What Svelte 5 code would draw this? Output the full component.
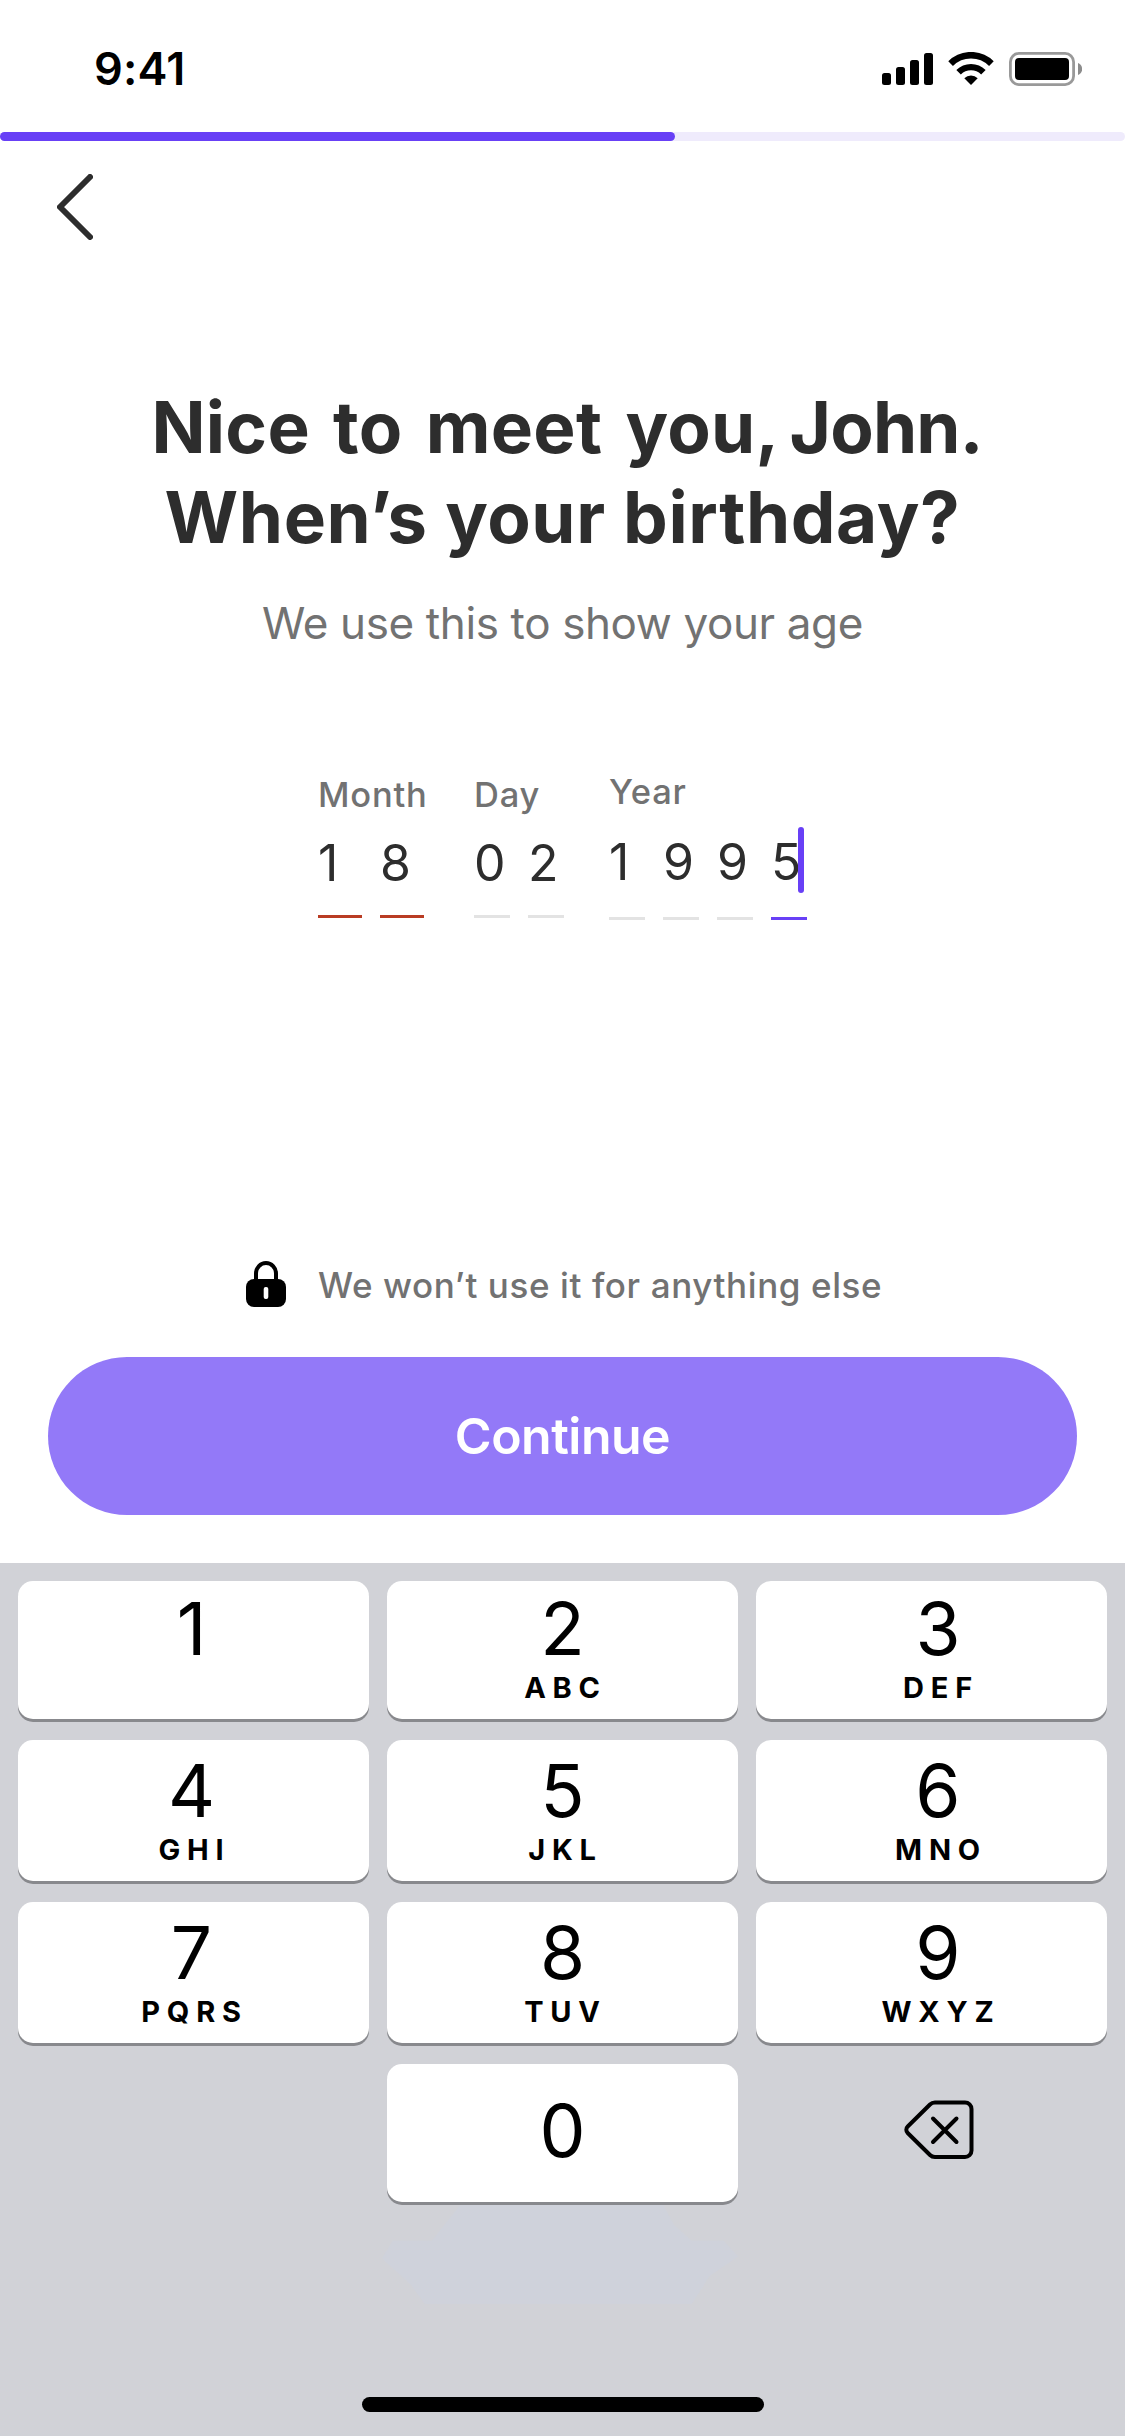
<script>
    const progress = 60;

    // Birthday entry, one group per date part
    let groups = [
        { name: 'Month', digits: ['1', '8'], invalid: true },
        { name: 'Day', digits: ['0', '2'], invalid: false },
        { name: 'Year', digits: ['1', '9', '9', '5'], invalid: false }
    ];

    // The cell that holds the caret
    let active = { group: 2, cell: 3 };

    const keys = [
        { digit: '1', letters: '' },
        { digit: '2', letters: 'ABC' },
        { digit: '3', letters: 'DEF' },
        { digit: '4', letters: 'GHI' },
        { digit: '5', letters: 'JKL' },
        { digit: '6', letters: 'MNO' },
        { digit: '7', letters: 'PQRS' },
        { digit: '8', letters: 'TUV' },
        { digit: '9', letters: 'WXYZ' }
    ];

    function setDigit(value) {
        groups[active.group].digits[active.cell] = value;
        groups = groups;
    }
</script>

<div class="screen">
    <main>
        <header class="statusBar">
            <span class="time">9:41</span>
            <div class="statusIcons">
                <svg class="signal" width="51" height="32" viewBox="0 0 51 32">
                    <rect x="0" y="20" width="9" height="12" rx="2.5" />
                    <rect x="14" y="14" width="9" height="18" rx="2.5" />
                    <rect x="28" y="7" width="9" height="25" rx="2.5" />
                    <rect x="42" y="0" width="9" height="32" rx="2.5" />
                </svg>
                <svg class="wifi" width="46" height="33" viewBox="0 0 46 33">
                    <path d="M2.6 11.6a29 29 0 0 1 40.8 0" fill="none" stroke="#000" stroke-width="6.6" />
                    <path d="M10.6 20.2a17.6 17.6 0 0 1 24.8 0" fill="none" stroke="#000" stroke-width="6.4" />
                    <path d="M16.3 26.2a9.6 9.6 0 0 1 13.4 0L23 33z" />
                </svg>
                <svg class="battery" width="73" height="34" viewBox="0 0 73 34">
                    <rect x="1.4" y="1.4" width="63.2" height="31.2" rx="8.5" fill="none" stroke="#999" stroke-width="2.8" />
                    <rect x="6" y="6" width="54" height="22" rx="4" />
                    <path d="M69 11v12c2.6-1 4.2-3.3 4.2-6s-1.6-5-4.2-6z" fill="#8c8c8c" />
                </svg>
            </div>
        </header>

        <div class="progress">
            <div class="progressValue" style="width: {progress}%"></div>
        </div>

        <button class="back" aria-label="Back">
            <svg width="36" height="66" viewBox="0 0 36 66">
                <path d="M33 3 3 33l30 30" fill="none" stroke="#2d2d2d" stroke-width="6" stroke-linecap="round" stroke-linejoin="round" />
            </svg>
        </button>

        <h1>
            <span class="greeting">Nice to meet you, <span class="name">John.</span></span>
            <span class="question">When’s your birthday?</span>
        </h1>
        <p class="subtitle">We use this to show your age</p>

        <section class="birthday">
            {#each groups as group, g}
                <div class="group {group.name.toLowerCase()}" class:invalid={group.invalid}>
                    <span class="label">{group.name}</span>
                    <div class="cells">
                        {#each group.digits as digit, c}
                            <span class="cell" class:active={active.group === g && active.cell === c}>{digit}</span>
                        {/each}
                    </div>
                </div>
            {/each}
        </section>

        <footer>
            <p class="privacy">
                <svg width="40" height="46" viewBox="0 0 40 46">
                    <path d="M10 20V12.5a10 10.5 0 0 1 20 0V20" fill="none" stroke="#000" stroke-width="4" />
                    <rect x="0" y="18" width="40" height="28" rx="8" />
                    <rect x="17.7" y="26" width="4.6" height="12" rx="2" fill="#fff" />
                </svg>
                <span>We won’t use it for anything else</span>
            </p>
            <button class="continue">Continue</button>
        </footer>
    </main>

    <section class="keyboard">
        <div class="keys">
            {#each keys as key}
                <button class="key" on:click={() => setDigit(key.digit)}>
                    <span class="digit">{key.digit}</span>
                    <span class="letters">{key.letters}</span>
                </button>
            {/each}
            <span></span>
            <button class="key zero" on:click={() => setDigit('0')}>
                <span class="digit">0</span>
            </button>
            <button class="delete" aria-label="Delete" on:click={() => setDigit('')}>
                <svg width="70" height="60" viewBox="0 0 70 60" fill="none" stroke="#000" stroke-width="4" stroke-linecap="round" stroke-linejoin="round">
                    <path d="M31 2.5H61a6.5 6.5 0 0 1 6.5 6.5V50.5a6.5 6.5 0 0 1-6.5 6.5H31a7 7 0 0 1-5-2L3.7 33a4.5 4.5 0 0 1 0-6.5L26 4.5a7 7 0 0 1 5-2z" />
                    <path d="M29 18.5 52.5 42M52.5 18.5 29 42" />
                </svg>
            </button>
        </div>
        <div class="homeIndicator"></div>
    </section>
</div>

<style>
    :global(body) {
        background: #fff;
    }

    .screen {
        width: 1125px;
        height: 2436px;
        display: flex;
        flex-direction: column;
        overflow: hidden;
        font-family: Inter, "Liberation Sans", sans-serif;
        color: #2d2d2d;
    }

    button {
        border: none;
        padding: 0;
        background: none;
        font-family: inherit;
        cursor: pointer;
    }

    svg {
        display: block;
    }

    main {
        height: 1563px;
        display: flex;
        flex-direction: column;
        background: #fff;
    }

    .statusBar {
        height: 132px;
        box-sizing: border-box;
        padding: 5px 43px 0 94px;
        display: flex;
        align-items: center;
        justify-content: space-between;
    }

    .time {
        font-size: 45px;
        font-weight: 600;
        letter-spacing: 0.2px;
        color: #000;
    }

    .statusIcons {
        display: flex;
        align-items: center;
    }

    .wifi {
        margin: 0 15px;
    }

    .progress {
        height: 9px;
        border-radius: 5px;
        background: #efebfc;
    }

    .progressValue {
        height: 100%;
        border-radius: 5px;
        background: #6840f6;
    }

    .back {
        align-self: flex-start;
        margin: 33px 0 0 57px;
    }

    h1 {
        margin: 142px 0 0;
        text-align: center;
        font-size: 71px;
        line-height: 90px;
        font-weight: 700;
        white-space: nowrap;
    }

    h1 > span {
        display: block;
    }

    .greeting {
        padding-left: 9px;
        letter-spacing: 0.3px;
        word-spacing: 6px;
    }

    .name {
        margin-left: -11px;
        letter-spacing: -0.8px;
    }

    .question {
        letter-spacing: 0.6px;
    }

    .subtitle {
        margin: 34px 0 0;
        text-align: center;
        font-size: 44px;
        line-height: 54px;
        letter-spacing: -0.38px;
        color: #727272;
    }

    .birthday {
        margin-top: 121px;
        padding-left: 318px;
        display: flex;
        align-items: flex-start;
    }

    .group {
        padding-top: 3px;
    }

    .month {
        width: 156px;
    }

    .day {
        width: 135px;
    }

    .year {
        padding-top: 0;
    }

    .label {
        display: block;
        font-size: 34.5px;
        line-height: 42px;
        font-weight: 500;
        letter-spacing: 0.8px;
        color: #727272;
    }

    .cells {
        display: flex;
        gap: 18px;
        margin-top: 16px;
    }

    .year .cells {
        margin-top: 18px;
    }

    .cell {
        position: relative;
        box-sizing: border-box;
        width: 36px;
        height: 86px;
        border-bottom: 3px solid #e3e3e3;
        font-size: 50px;
        line-height: 62px;
    }

    .year .cell {
        height: 89px;
    }

    .invalid .cell {
        width: 44px;
        border-color: #b93c23;
    }

    .cell.active {
        border-color: #6840f6;
    }

    /* caret over the active digit */
    .cell.active::after {
        content: '';
        position: absolute;
        top: -4px;
        right: 3px;
        width: 6px;
        height: 66px;
        border-radius: 3px;
        background: #6840f6;
    }

    footer {
        margin-top: auto;
        padding: 0 48px 48px;
    }

    .privacy {
        margin: 0 0 49px;
        padding-left: 198px;
        display: flex;
        align-items: center;
        gap: 32px;
        font-size: 35px;
        line-height: 46px;
        font-weight: 500;
        letter-spacing: 0.6px;
        color: #727272;
        white-space: nowrap;
    }

    .privacy span {
        padding-top: 2px;
    }

    .continue {
        display: block;
        width: 100%;
        height: 158px;
        border-radius: 79px;
        background: #9379f8;
        color: #fff;
        font-size: 50px;
        font-weight: 600;
        letter-spacing: -0.5px;
    }

    .keyboard {
        flex: 1;
        display: flex;
        flex-direction: column;
        justify-content: space-between;
        padding: 18px 18px 24px;
        background: #d1d2d7;
    }

    .keys {
        position: relative;
        display: grid;
        grid-template-columns: repeat(3, 351px);
        grid-template-rows: 138px 141px 141px 138px;
        gap: 21px 18px;
    }

    /* faint cool tint under the zero key */
    .keys::after {
        content: '';
        position: absolute;
        top: 624px;
        left: 364px;
        width: 356px;
        height: 99px;
        background: #cfd2db;
        clip-path: polygon(22% 0, 79% 0, 82% 20%, 87% 36%, 96% 36%, 100% 52%, 92% 72%, 87% 100%, 12% 100%, 8% 80%, 0 54%, 3% 36%, 14% 36%, 18% 18%);
    }

    .key {
        display: flex;
        flex-direction: column;
        align-items: center;
        justify-content: flex-end;
        padding-bottom: 16px;
        border-radius: 15px;
        background: #fff;
        box-shadow: 0 3px 0 #88898d;
        color: #000;
    }

    .key:nth-child(3n + 1) {
        padding-right: 4px;
    }

    .key:nth-child(3n) {
        padding-left: 13px;
    }

    .digit {
        font-size: 73px;
        line-height: 80px;
    }

    .letters {
        height: 30px;
        margin-top: 4px;
        padding-left: 6px;
        font-size: 29px;
        line-height: 30px;
        font-weight: 700;
        letter-spacing: 6.8px;
    }

    .zero {
        padding-bottom: 31px;
    }

    .delete {
        display: flex;
        align-items: center;
        justify-content: center;
        padding: 0 0 7px 14px;
    }

    .homeIndicator {
        align-self: center;
        width: 402px;
        height: 15px;
        border-radius: 8px;
        background: #000;
    }
</style>
